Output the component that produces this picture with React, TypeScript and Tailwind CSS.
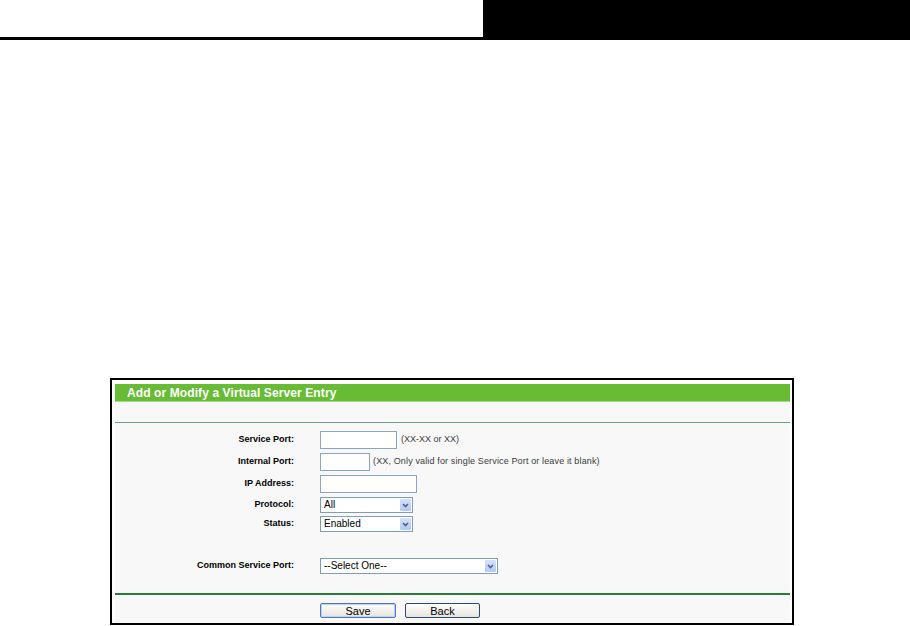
import React from 'react';

const Chevron = () => (
  <svg width="7" height="5" viewBox="0 0 7 5">
    <polyline points="1,1 3.5,3.5 6,1" fill="none" stroke="#4d6185" strokeWidth="1.6" />
  </svg>
);

const FakeSelect: React.FC<{ value: string; className: string }> = ({ value, className }) => (
  <div className={`flex h-[16px] items-stretch border border-[#7f9db9] bg-white ${className}`}>
    <span className="flex-1 pl-[3px] text-[10px] leading-[14px] text-black">{value}</span>
    <span className="m-px flex w-[11px] items-center justify-center rounded-[1px] bg-linear-to-b from-[#d6e1fb] to-[#b4c7f5]">
      <Chevron />
    </span>
  </div>
);

const Row: React.FC<{ label: string; children: React.ReactNode }> = ({ label, children }) => (
  <div className="flex items-center">
    <div className="w-[185px] pr-[6px] text-right text-[9px] font-bold text-black">{label}</div>
    <div className="ml-[20px] flex items-center">{children}</div>
  </div>
);

const TextBox: React.FC<{ className: string }> = ({ className }) => (
  <div className={`h-[18px] border border-[#8ea5c2] bg-white ${className}`} />
);

export default function App() {
  return (
    <div className="h-[626px] w-[910px] overflow-hidden bg-white font-['Liberation_Sans',Arial,sans-serif]">
      {/* page header strip */}
      <div className="flex h-[40px]">
        <div className="flex w-[483px] flex-col justify-end">
          <div className="h-[3px] bg-black" />
        </div>
        <div className="flex-1 bg-black" />
      </div>

      <div className="ml-[110px] mt-[338px] h-[247px] w-[684px] border-2 border-black bg-white pl-[3px] pr-[2px] pt-[4px]">
        <div className="flex h-[18px] items-center border-b border-[#a8d98a] bg-[#67bb35] pl-[12px] text-[12px] font-bold tracking-[0.1px] text-white">
          Add or Modify a Virtual Server Entry
        </div>
        <div className="h-[221px] bg-[#f8f8f8]">
          <div className="h-[20px]" />
          <div className="h-px bg-[#6f9e88]" />

          <div className="flex flex-col pt-[8px]">
            <Row label="Service Port:">
              <TextBox className="w-[77px]" />
              <span className="ml-[4px] text-[9px] text-[#3a3a3a]">(XX-XX or XX)</span>
            </Row>
            <div className="mt-[4px]">
              <Row label="Internal Port:">
                <TextBox className="w-[50px]" />
                <span className="ml-[3px] text-[9px] tracking-[0.14px] text-[#3a3a3a]">
                  (XX, Only valid for single Service Port or leave it blank)
                </span>
              </Row>
            </div>
            <div className="mt-[4px]">
              <Row label="IP Address:">
                <TextBox className="w-[97px]" />
              </Row>
            </div>
            <div className="mt-[4px]">
              <Row label="Protocol:">
                <FakeSelect value="All" className="w-[93px]" />
              </Row>
            </div>
            <div className="mt-[3px]">
              <Row label="Status:">
                <FakeSelect value="Enabled" className="w-[93px]" />
              </Row>
            </div>
            <div className="mt-[26px]">
              <Row label="Common Service Port:">
                <FakeSelect value="--Select One--" className="w-[178px]" />
              </Row>
            </div>
          </div>

          <div className="mt-[19px] h-[2px] bg-[#2b7a3e]" />

          <div className="ml-[205px] mt-[8px] flex gap-[9px]">
            <button className="h-[15px] w-[76px] rounded-[2px] border border-[#4f78c4] bg-linear-to-b from-white to-[#e6e4dc] text-[11px] leading-[12px] text-black shadow-[inset_0_0_0_1px_#bcd0f2]">
              Save
            </button>
            <button className="h-[15px] w-[75px] rounded-[2px] border border-[#2c4a72] bg-linear-to-b from-white to-[#e6e4dc] text-[11px] leading-[12px] text-black">
              Back
            </button>
          </div>
        </div>
      </div>
    </div>
  );
}
